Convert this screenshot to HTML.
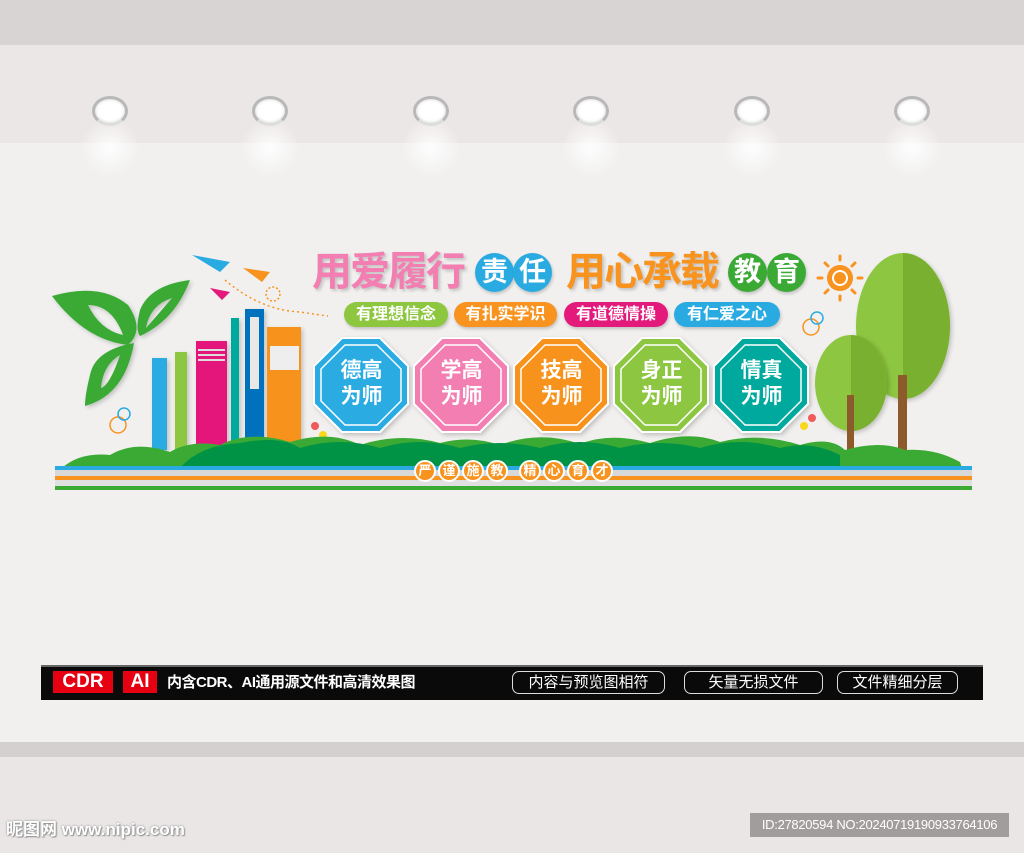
<!DOCTYPE html>
<html><head><meta charset="utf-8"><style>
*{margin:0;padding:0;box-sizing:border-box}
body{width:1024px;height:853px;position:relative;overflow:hidden;background:#f1f0ef;font-family:"Liberation Sans","Noto Sans CJK SC",sans-serif}
.a{position:absolute}
.lamp{position:absolute;top:96px;width:36px;height:30px;border-radius:50%;background:#fff;border:3px solid #b8b8b8;border-bottom-color:#ddd;box-shadow:inset 0 0 3px #ccc}
.glow{position:absolute;top:118px;width:60px;height:60px;border-radius:50%;background:radial-gradient(ellipse,rgba(255,255,255,.9),rgba(255,255,255,0) 70%)}
.pill{position:absolute;top:302px;height:25px;border-radius:13px;color:#fff;font-weight:bold;font-size:16px;line-height:25px;text-align:center;box-shadow:1px 2px 3px rgba(0,0,0,.2)}
.big{position:absolute;top:250px;font-size:40px;font-weight:bold;line-height:44px;letter-spacing:-2px;text-shadow:2px 2px 3px rgba(0,0,0,.2)}
.c{position:absolute;top:253px;width:39px;height:39px;border-radius:50%;color:#fff;font-size:27px;font-weight:bold;line-height:38px;text-align:center;box-shadow:1px 2px 3px rgba(0,0,0,.2)}
.ot{position:absolute;top:358px;width:95px;color:#fff;font-weight:bold;font-size:21px;line-height:26px;text-align:center}
.sc{position:absolute;top:460px;width:22px;height:22px;border-radius:50%;background:#f7931e;border:2px solid #fff;color:#fff;font-size:13px;font-weight:bold;line-height:18px;text-align:center}
.tag{position:absolute;top:671px;height:23px;border:1px solid #ddd;border-radius:7px;color:#fff;font-size:15px;line-height:21px;text-align:center}
</style></head><body>
<div class="a" style="left:0;top:0;width:1024px;height:45px;background:#d8d4d3"></div>
<div class="a" style="left:0;top:45px;width:1024px;height:98px;background:#ebe7e6"></div>
<div class="a" style="left:0;top:742px;width:1024px;height:15px;background:#d4d0cf"></div>
<div class="a" style="left:0;top:757px;width:1024px;height:96px;background:#e9e6e5"></div>

<div class="glow" style="left:80px"></div><div class="glow" style="left:240px"></div><div class="glow" style="left:401px"></div><div class="glow" style="left:561px"></div><div class="glow" style="left:722px"></div><div class="glow" style="left:882px"></div>
<div class="lamp" style="left:92px"></div><div class="lamp" style="left:252px"></div><div class="lamp" style="left:413px"></div><div class="lamp" style="left:573px"></div><div class="lamp" style="left:734px"></div><div class="lamp" style="left:894px"></div>

<svg class="a" style="left:0;top:0" width="1024" height="853">
<defs><filter id="sh"><feDropShadow dx="2" dy="2" stdDeviation="2" flood-opacity=".2"/></filter></defs>
<g fill="#3aaa35" filter="url(#sh)">
<path d="M52 296 Q100 282 128 305 Q145 330 128 345 Q85 340 52 296Z M88 305 Q112 305 123 335 Q100 330 88 305Z" fill-rule="evenodd"/>
<path d="M190 280 Q150 285 140 310 Q135 330 140 336 Q175 320 190 280Z M172 298 Q155 318 146 328 Q150 305 172 298Z" fill-rule="evenodd"/>
<path d="M134 343 Q95 350 90 375 Q85 395 85 406 Q125 395 134 343Z M120 355 Q110 385 101 388 Q103 365 120 355Z" fill-rule="evenodd"/>
</g>
<circle cx="118" cy="425" r="8" fill="none" stroke="#f7931e" stroke-width="1.5"/>
<circle cx="124" cy="414" r="6" fill="none" stroke="#29abe2" stroke-width="1.5"/>
<path d="M192 255 L230 262 L220 272 Z" fill="#29abe2"/><path d="M243 268 L270 272 L262 282Z" fill="#f7931e"/><path d="M210 288 L230 292 L222 300Z" fill="#e4197c"/>
<path d="M225 280 Q260 310 300 312 Q320 315 328 316" fill="none" stroke="#f7931e" stroke-dasharray="2 3" stroke-width="1.5"/>
<circle cx="273" cy="294" r="7" fill="none" stroke="#f7931e" stroke-dasharray="2 2" stroke-width="1.5"/>
<g filter="url(#sh)">
<rect x="152" y="358" width="15" height="92" fill="#29abe2"/>
<rect x="175" y="352" width="12" height="98" fill="#8dc63f"/>
<rect x="196" y="341" width="31" height="109" fill="#e4197c"/>
<rect x="231" y="318" width="8" height="132" fill="#00a99d"/>
<rect x="245" y="309" width="19" height="141" fill="#0071bc"/>
<rect x="267" y="327" width="34" height="123" fill="#f7931e"/>
</g>
<rect x="198" y="349" width="27" height="2" fill="#ddd"/><rect x="198" y="354" width="27" height="2" fill="#ddd"/><rect x="198" y="359" width="27" height="2" fill="#ddd"/>
<rect x="250" y="317" width="9" height="72" fill="#e8e8e8"/>
<rect x="270" y="346" width="29" height="24" fill="#eee"/>
<circle cx="840" cy="278" r="13" fill="#f7931e"/><circle cx="840" cy="278" r="7" fill="none" stroke="#fff" stroke-width="2"/>
<g stroke="#f7931e" stroke-width="3" stroke-linecap="round"><line x1="840" y1="256" x2="840" y2="260"/><line x1="840" y1="296" x2="840" y2="300"/><line x1="818" y1="278" x2="822" y2="278"/><line x1="858" y1="278" x2="862" y2="278"/><line x1="825" y1="263" x2="828" y2="266"/><line x1="852" y1="290" x2="855" y2="293"/><line x1="825" y1="293" x2="828" y2="290"/><line x1="852" y1="266" x2="855" y2="263"/></g>
<circle cx="811" cy="327" r="8" fill="none" stroke="#f7931e" stroke-width="1.5"/><circle cx="817" cy="318" r="6" fill="none" stroke="#29abe2" stroke-width="1.5"/>
<ellipse cx="903" cy="326" rx="47" ry="73" fill="#8dc63f" filter="url(#sh)"/>
<path d="M903 253 A47 73 0 0 1 903 399Z" fill="#7ab030"/>
<rect x="898" y="375" width="9" height="75" fill="#8c5a2b"/>
<ellipse cx="851" cy="383" rx="36" ry="48" fill="#8dc63f" filter="url(#sh)"/>
<path d="M851 335 A36 48 0 0 1 851 431Z" fill="#7ab030"/>
<rect x="847" y="395" width="7" height="55" fill="#8c5a2b"/>
<circle cx="315" cy="426" r="4" fill="#f05a5a"/><circle cx="323" cy="435" r="4" fill="#f9d71c"/>
<circle cx="812" cy="418" r="4" fill="#f05a5a"/><circle cx="804" cy="426" r="4" fill="#f9d71c"/>
<g filter="url(#sh)">
<polygon points="342,338 380,338 408,366 408,404 380,432 342,432 314,404 314,366" fill="#29abe2" stroke="#fff" stroke-width="2"/>
<polygon points="442,338 480,338 508,366 508,404 480,432 442,432 414,404 414,366" fill="#f27eb2" stroke="#fff" stroke-width="2"/>
<polygon points="542,338 580,338 608,366 608,404 580,432 542,432 514,404 514,366" fill="#f7931e" stroke="#fff" stroke-width="2"/>
<polygon points="642,338 680,338 708,366 708,404 680,432 642,432 614,404 614,366" fill="#8dc63f" stroke="#fff" stroke-width="2"/>
<polygon points="742,338 780,338 808,366 808,404 780,432 742,432 714,404 714,366" fill="#00a99d" stroke="#fff" stroke-width="2"/>
</g>
<g fill="none" stroke="#fff" stroke-width="1.5">
<polygon points="345,345 377,345 401,369 401,401 377,425 345,425 321,401 321,369"/>
<polygon points="445,345 477,345 501,369 501,401 477,425 445,425 421,401 421,369"/>
<polygon points="545,345 577,345 601,369 601,401 577,425 545,425 521,401 521,369"/>
<polygon points="645,345 677,345 701,369 701,401 677,425 645,425 621,401 621,369"/>
<polygon points="745,345 777,345 801,369 801,401 777,425 745,425 721,401 721,369"/>
</g>
<path d="M62 468 Q80 452 110 455 Q135 440 170 452 Q190 440 220 445 Q250 430 290 442 Q330 430 360 445 Q400 432 440 443 Q470 435 500 445 Q540 430 580 444 Q610 432 650 443 Q690 430 720 442 Q760 432 800 445 Q830 436 845 450 Q880 440 905 450 Q935 448 960 462 L962 468Z" fill="#3aaa35"/>
<path d="M180 468 Q200 445 240 443 Q280 435 300 448 Q340 436 380 448 Q420 436 460 448 Q500 438 540 448 Q580 436 620 448 Q660 438 700 448 Q740 436 780 448 Q810 440 840 455 L840 468Z" fill="#009245"/>
<rect x="55" y="466" width="917" height="4" fill="#29abe2"/>
<rect x="55" y="476" width="917" height="4" fill="#f7931e"/>
<rect x="55" y="486" width="917" height="4" fill="#3aaa35"/>
<rect x="55" y="470" width="917" height="6" fill="#d8d8d8"/>
<rect x="55" y="480" width="917" height="6" fill="#e0e0e0"/>
</svg>

<div class="big" style="left:312px;color:#f27eb2">用爱履行</div>
<div class="c" style="left:475px;background:#29abe2">责</div><div class="c" style="left:513px;background:#29abe2">任</div>
<div class="big" style="left:566px;color:#f7931e">用心承载</div>
<div class="c" style="left:728px;background:#3aaa35">教</div><div class="c" style="left:767px;background:#3aaa35">育</div>

<div class="pill" style="left:344px;width:104px;background:#8dc63f">有理想信念</div>
<div class="pill" style="left:454px;width:103px;background:#f7931e">有扎实学识</div>
<div class="pill" style="left:564px;width:104px;background:#e4197c">有道德情操</div>
<div class="pill" style="left:674px;width:106px;background:#29abe2">有仁爱之心</div>

<div class="ot" style="left:314px">德高<br>为师</div>
<div class="ot" style="left:414px">学高<br>为师</div>
<div class="ot" style="left:514px">技高<br>为师</div>
<div class="ot" style="left:614px">身正<br>为师</div>
<div class="ot" style="left:714px">情真<br>为师</div>

<div class="sc" style="left:414px">严</div><div class="sc" style="left:438px">谨</div><div class="sc" style="left:462px">施</div><div class="sc" style="left:486px">教</div>
<div class="sc" style="left:519px">精</div><div class="sc" style="left:543px">心</div><div class="sc" style="left:567px">育</div><div class="sc" style="left:591px">才</div>

<div class="a" style="left:41px;top:665px;width:942px;height:35px;background:#0a0a0a;border-top:2px solid #666"></div>
<div class="a" style="left:53px;top:671px;width:60px;height:22px;background:#e60012;color:#fff;font-size:19px;font-weight:bold;line-height:22px;text-align:center">CDR</div>
<div class="a" style="left:123px;top:671px;width:34px;height:22px;background:#e60012;color:#fff;font-size:19px;font-weight:bold;line-height:22px;text-align:center">AI</div>
<div class="a" style="left:167px;top:672px;color:#fff;font-size:15px;font-weight:bold;line-height:22px;letter-spacing:-.5px">内含CDR、AI通用源文件和高清效果图</div>
<div class="tag" style="left:512px;width:153px">内容与预览图相符</div>
<div class="tag" style="left:684px;width:139px">矢量无损文件</div>
<div class="tag" style="left:837px;width:121px">文件精细分层</div>

<div class="a" style="left:6px;top:815px;color:#fff;font-size:17px;font-weight:bold;text-shadow:0 0 2px #888,1px 1px 1px #999">昵图网 www.nipic.com</div>
<div class="a" style="left:750px;top:813px;width:259px;height:24px;background:#a19d9c;color:#fff;font-size:13px;line-height:24px;text-align:center;letter-spacing:-.3px">ID:27820594 NO:20240719190933764106</div>
</body></html>
